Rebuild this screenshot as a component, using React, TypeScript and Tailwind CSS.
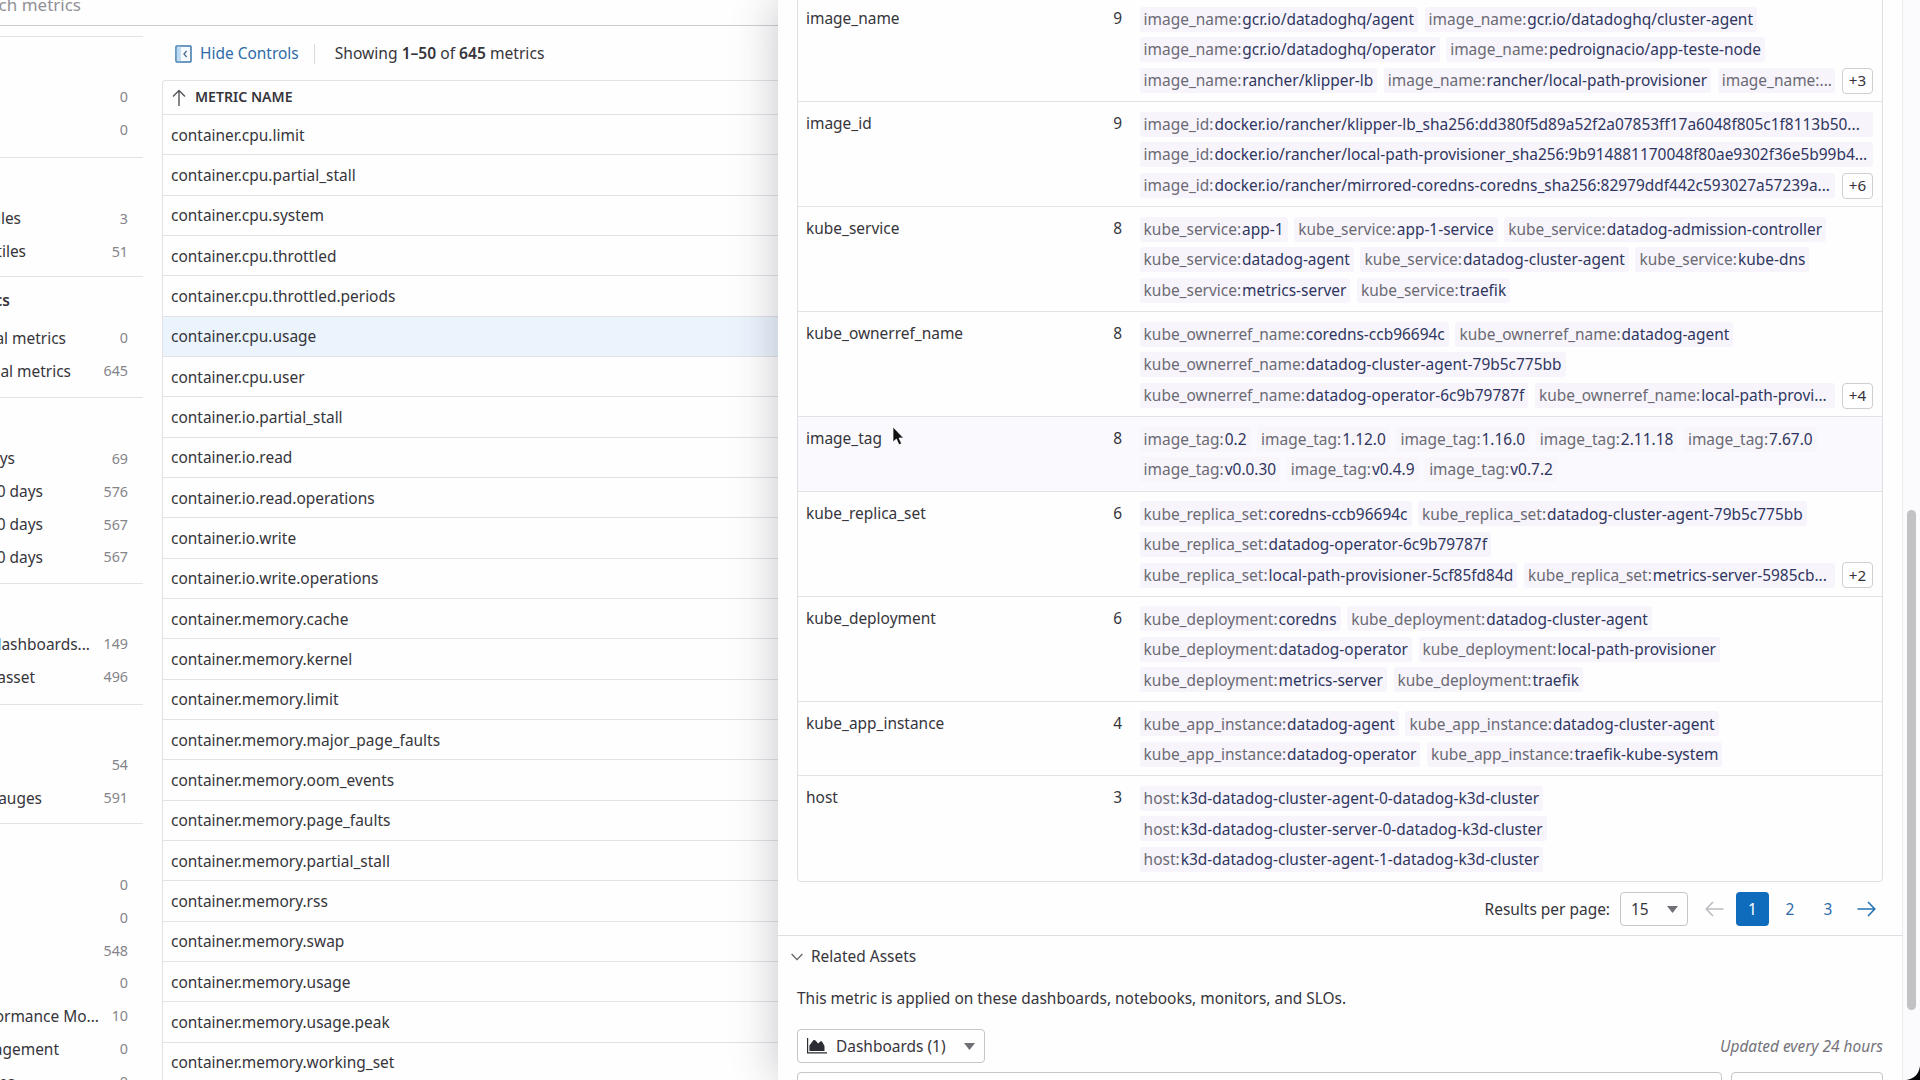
import { ReactNode } from "react";

type SideRow = { label?: string; count: string; bold?: boolean };
type SideGroup = { height: string; offset: string; title?: string; rows: SideRow[] };

const sideGroups: SideGroup[] = [
  { height: "h-[120.5px]", offset: "pt-[44px]", rows: [{ count: "0" }, { count: "0" }] },
  { height: "h-[119.5px]", offset: "pt-[45px]", rows: [{ label: "iles", count: "3" }, { label: "tiles", count: "51" }] },
  {
    height: "h-[121px]",
    offset: "pt-[45px]",
    title: "cs",
    rows: [{ label: "al metrics", count: "0" }, { label: "al metrics", count: "645" }],
  },
  {
    height: "h-[185.5px]",
    offset: "pt-[44.5px]",
    rows: [
      { label: "ys", count: "69" },
      { label: "0 days", count: "576" },
      { label: "0 days", count: "567" },
      { label: "0 days", count: "567" },
    ],
  },
  { height: "h-[121px]", offset: "pt-[44.5px]", rows: [{ label: "dashboards...", count: "149" }, { label: "asset", count: "496" }] },
  { height: "h-[119.5px]", offset: "pt-[44.5px]", rows: [{ count: "54" }, { label: "auges", count: "591" }] },
  {
    height: "h-[300px]",
    offset: "pt-[44.5px]",
    rows: [
      { count: "0" },
      { count: "0" },
      { count: "548" },
      { count: "0" },
      { label: "ormance Mo...", count: "10" },
      { label: "agement", count: "0" },
      { label: "es", count: "0" },
    ],
  },
];

const labelWidths: Record<string, string> = {
  "iles": "w-[21px]",
  "tiles": "w-[26px]",
  "ys": "w-[15px]",
  "0 days": "w-[43px]",
  "dashboards...": "w-[90px]",
  "asset": "w-[35px]",
  "auges": "w-[42px]",
  "ormance Mo...": "w-[99px]",
  "agement": "w-[59px]",
  "es": "w-[15px]",
};

function widthOf(row: SideRow) {
  if (row.label === "al metrics") return row.count === "0" ? "w-[66px]" : "w-[71px]";
  return labelWidths[row.label ?? ""] ?? "w-0";
}

const metrics = [
  "container.cpu.limit",
  "container.cpu.partial_stall",
  "container.cpu.system",
  "container.cpu.throttled",
  "container.cpu.throttled.periods",
  "container.cpu.usage",
  "container.cpu.user",
  "container.io.partial_stall",
  "container.io.read",
  "container.io.read.operations",
  "container.io.write",
  "container.io.write.operations",
  "container.memory.cache",
  "container.memory.kernel",
  "container.memory.limit",
  "container.memory.major_page_faults",
  "container.memory.oom_events",
  "container.memory.page_faults",
  "container.memory.partial_stall",
  "container.memory.rss",
  "container.memory.swap",
  "container.memory.usage",
  "container.memory.usage.peak",
  "container.memory.working_set",
];

type TagRow = { name: string; count: number; lines: string[][]; more?: string; fill?: boolean; hover?: boolean };

const tagRows: TagRow[] = [
  {
    name: "image_name",
    count: 9,
    more: "+3",
    lines: [
      ["gcr.io/datadoghq/agent", "gcr.io/datadoghq/cluster-agent"],
      ["gcr.io/datadoghq/operator", "pedroignacio/app-teste-node"],
      ["rancher/klipper-lb", "rancher/local-path-provisioner", "..."],
    ],
  },
  {
    name: "image_id",
    count: 9,
    more: "+6",
    fill: true,
    lines: [
      ["docker.io/rancher/klipper-lb_sha256:dd380f5d89a52f2a07853ff17a6048f805c1f8113b50..."],
      ["docker.io/rancher/local-path-provisioner_sha256:9b914881170048f80ae9302f36e5b99b4..."],
      ["docker.io/rancher/mirrored-coredns-coredns_sha256:82979ddf442c593027a57239a..."],
    ],
  },
  {
    name: "kube_service",
    count: 8,
    lines: [
      ["app-1", "app-1-service", "datadog-admission-controller"],
      ["datadog-agent", "datadog-cluster-agent", "kube-dns"],
      ["metrics-server", "traefik"],
    ],
  },
  {
    name: "kube_ownerref_name",
    count: 8,
    more: "+4",
    lines: [
      ["coredns-ccb96694c", "datadog-agent"],
      ["datadog-cluster-agent-79b5c775bb"],
      ["datadog-operator-6c9b79787f", "local-path-provi..."],
    ],
  },
  {
    name: "image_tag",
    count: 8,
    hover: true,
    lines: [
      ["0.2", "1.12.0", "1.16.0", "2.11.18", "7.67.0"],
      ["v0.0.30", "v0.4.9", "v0.7.2"],
    ],
  },
  {
    name: "kube_replica_set",
    count: 6,
    more: "+2",
    lines: [
      ["coredns-ccb96694c", "datadog-cluster-agent-79b5c775bb"],
      ["datadog-operator-6c9b79787f"],
      ["local-path-provisioner-5cf85fd84d", "metrics-server-5985cb..."],
    ],
  },
  {
    name: "kube_deployment",
    count: 6,
    lines: [
      ["coredns", "datadog-cluster-agent"],
      ["datadog-operator", "local-path-provisioner"],
      ["metrics-server", "traefik"],
    ],
  },
  {
    name: "kube_app_instance",
    count: 4,
    lines: [
      ["datadog-agent", "datadog-cluster-agent"],
      ["datadog-operator", "traefik-kube-system"],
    ],
  },
  {
    name: "host",
    count: 3,
    lines: [
      ["k3d-datadog-cluster-agent-0-datadog-k3d-cluster"],
      ["k3d-datadog-cluster-server-0-datadog-k3d-cluster"],
      ["k3d-datadog-cluster-agent-1-datadog-k3d-cluster"],
    ],
  },
];

function Sidebar() {
  return (
    <aside className="w-[143px] shrink-0 pt-[5px]">
      {sideGroups.map((g, i) => (
        <section key={i} className={`${g.height} ${g.offset} relative border-t border-[#e3e2e6]`}>
          {g.title && <h3 className="absolute top-[12px] left-0 flex w-[10px] justify-end leading-[22px] font-semibold">{g.title}</h3>}
          {g.rows.map((row, j) => (
            <div key={j} className="flex h-[32.9px] items-center justify-between pr-[15px]">
              <span className={`${widthOf(row)} flex justify-end whitespace-nowrap`}>{row.label}</span>
              <span className="-mt-[1px] text-[14.3px] text-[#85848b]">{row.count}</span>
            </div>
          ))}
        </section>
      ))}
    </aside>
  );
}

function MetricTable() {
  return (
    <main className="ml-[19px] flex-1">
      <div className="flex h-[49px] items-center pb-[4px] pl-[13px]">
        <svg width="17" height="18" viewBox="0 0 17 18" fill="none">
          <rect x="1" y="0.9" width="15" height="16" rx="0.8" fill="#f6fafd" stroke="#3d78ac" strokeWidth="1.5" />
          <rect x="1.8" y="1.6" width="4" height="14.6" fill="#bcdcf3" />
          <path d="M11.6 6 9 9l2.6 3" stroke="#4b6f91" strokeWidth="1.3" />
        </svg>
        <span className="ml-2 text-[#2d6ba8]">Hide Controls</span>
        <span className="ml-[15px] h-5 w-px bg-[#d9d8dd]" />
        <span className="ml-[20px] text-[15.6px]">
          Showing <b className="font-semibold">1–50</b> of <b className="font-semibold">645</b> metrics
        </span>
      </div>
      <div className="rounded-tl border-t border-l border-[#e2e1e6]">
        <div className="flex h-[34px] items-center border-b border-[#e2e1e6] pl-[9px]">
          <svg width="14" height="18" viewBox="0 0 14 18" fill="none" stroke="#55545a" strokeWidth="1.4">
            <path d="M7 17V1.8M1 7.5l6-6 6 6" />
          </svg>
          <span className="-mt-[1px] ml-[9px] text-[14.1px] font-semibold">METRIC NAME</span>
        </div>
        {metrics.map((m) => (
          <div
            key={m}
            className={`flex h-[40.33px] items-center border-b border-[#e2e1e6] pt-[1.4px] pl-[8px] ${m === "container.cpu.usage" ? "bg-[#ebf4fd]" : ""}`}
          >
            {m}
          </div>
        ))}
      </div>
    </main>
  );
}

function Chip({ tag, value, grow, hover }: { tag: string; value: string; grow?: boolean; hover?: boolean }) {
  return (
    <span
      className={`flex h-[25px] items-center rounded-[3px] px-[4px] pt-px whitespace-nowrap ${grow ? "min-w-0 flex-1" : ""} ${hover ? "bg-[#f8f6fb]" : "bg-[#f7f5fb]"}`}
    >
      <span className="text-[#6b6a74]">{tag}:</span>
      <span className={value === "..." ? "text-[#6b6a74]" : "ml-[1px] text-[#2f3560]"}>{value}</span>
    </span>
  );
}

function TagTable() {
  return (
    <div className="-mt-[4px] overflow-hidden rounded-b border border-[#e0dfe4]">
      {tagRows.map((r, i) => (
        <div
          key={r.name}
          className={`flex ${r.lines.length === 3 ? "h-[105px]" : "h-[74.6px]"} ${i < tagRows.length - 1 ? "border-b border-[#e2e1e6]" : ""} ${r.hover ? "bg-[#faf9fd]" : ""}`}
        >
          <div className="w-[260px] pt-[10px] pl-[8px] leading-[22px]">{r.name}</div>
          <div className="w-[64px] pt-[10px] text-right leading-[22px]">{r.count}</div>
          <div className="ml-[17.6px] flex w-[733.4px] flex-col gap-[5.5px] pt-[9.5px]">
            {r.lines.map((line, li) => {
              const last = li === r.lines.length - 1;
              return (
                <div key={li} className="flex items-center gap-[6.6px]">
                  {line.map((v, k) => (
                    <Chip
                      key={v}
                      tag={r.name}
                      value={v}
                      hover={r.hover}
                      grow={r.fill || (last && !!r.more && k === line.length - 1)}
                    />
                  ))}
                  {last && r.more && (
                    <span className="flex h-[26px] w-[31px] shrink-0 items-center justify-center rounded border border-[#cfced4] bg-white text-[15.2px]">
                      {r.more}
                    </span>
                  )}
                </div>
              );
            })}
          </div>
        </div>
      ))}
    </div>
  );
}

function Caret() {
  return (
    <svg width="11" height="7" viewBox="0 0 11 7" fill="#706f76">
      <path d="M0 0h11L5.5 7z" />
    </svg>
  );
}

function Arrow({ className, children }: { className: string; children: ReactNode }) {
  return (
    <svg width="19" height="16" viewBox="0 0 19 16" fill="none" stroke="currentColor" strokeWidth="1.6" className={className}>
      {children}
    </svg>
  );
}

function Pagination() {
  return (
    <div className="mt-[10px] flex h-[34px] items-center justify-end">
      <span>Results per page:</span>
      <span className="ml-[10px] flex h-[34px] w-[68px] items-center justify-between rounded border border-[#c6c5cb] pr-[9px] pl-[10px]">
        15 <Caret />
      </span>
      <Arrow className="ml-[17px] text-[#bdbcc2]">
        <path d="M18.5 8H1.5M8 1 1.2 8 8 15" />
      </Arrow>
      <span className="ml-[12px] flex h-[34px] w-[33px] items-center justify-center rounded bg-[#0f6cbd] text-white">1</span>
      <span className="w-[42px] text-center text-[#2d6ba8]">2</span>
      <span className="w-[34px] text-center text-[#2d6ba8]">3</span>
      <Arrow className="mr-[7px] ml-[12px] text-[#2373b5]">
        <path d="M.5 8h17M11 1l6.8 7-6.8 7" />
      </Arrow>
    </div>
  );
}

function Drawer() {
  return (
    <div className="absolute top-0 left-[778px] flex h-[1080px] w-[1142px] overflow-hidden bg-[#fefefe] shadow-[0_0_42px_rgba(50,45,65,0.28)]">
      <div className="w-[1124px]">
        <div className="mr-[19px] ml-[19px]">
          <TagTable />
          <Pagination />
        </div>
        <div className="mt-[9px] border-t border-[#dedde2]" />
        <div className="flex h-[41px] items-center pl-[13px]">
          <svg width="12" height="8" viewBox="0 0 12 8" fill="none" stroke="#606066" strokeWidth="1.3">
            <path d="m.6 1 5.4 5.6L11.4 1" />
          </svg>
          <span className="ml-[8px]">Related Assets</span>
        </div>
        <div className="mr-[19px] ml-[19px]">
          <p className="mt-[10px] leading-[22px]">This metric is applied on these dashboards, notebooks, monitors, and SLOs.</p>
          <div className="mt-[20px] flex h-[34px] items-center justify-between">
            <span className="flex h-[34px] w-[188px] items-center rounded border border-[#c6c5cb] pl-[9px]">
              <svg width="20" height="16" viewBox="0 0 20 16" fill="#2b2d33">
                <path d="M0 0h1.200v14.300H20v1.200H0zM2.400 13V7.500L6.500 2l1.700 0.200 3 3.200 2.300-2.200 1.500.2L17.500 8v5z" />
              </svg>
              <span className="ml-[9px] w-[128px]">Dashboards (1)</span>
              <Caret />
            </span>
            <span className="text-[15.45px] text-[#74737a] italic">Updated every 24 hours</span>
          </div>
          <div className="mt-[9px] flex gap-[9px]">
            <div className="h-10 flex-1 rounded border border-[#c6c5cb]" />
            <div className="h-10 w-[152px] rounded border border-[#c6c5cb]" />
          </div>
        </div>
      </div>
      <div className="flex flex-1 justify-center border-l border-[#ebeaee] bg-[#fbfafc] pt-[510px]">
        <div className="h-[500px] w-[9px] rounded-full bg-[#c2c1c5]" />
      </div>
      <svg width="14" height="14" viewBox="0 0 14 14" className="absolute right-0 bottom-0" fill="#050507">
        <path d="M14 0v14H0C8 13 13 8 14 0z" />
      </svg>
    </div>
  );
}

export default function App() {
  return (
    <div className="relative h-[1080px] w-[1920px] overflow-hidden bg-[#fefefe] font-['Noto_Sans',sans-serif] text-[15.46px] text-[#36353b]">
      <div className="flex h-[26px] w-full items-start border-b border-[#cdccd1]">
        <span className="-mt-[7px] flex w-[81px] justify-end text-[17px] leading-[24px] whitespace-nowrap text-[#929197]">ch metrics</span>
      </div>
      <div className="flex">
        <div className="flex pt-[5px]">
          <Sidebar />
        </div>
        <div className="flex flex-1 pt-[5px]">
          <MetricTable />
        </div>
      </div>
      <Drawer />
      <svg width="12" height="20" viewBox="0 0 12 20" className="absolute top-[426px] left-[892px]">
        <path d="M1 1v15l3.400-3 2.600 5.800 2.600-1.200L7 12h4.500z" fill="#111" stroke="#fff" strokeWidth=".7" />
      </svg>
    </div>
  );
}
